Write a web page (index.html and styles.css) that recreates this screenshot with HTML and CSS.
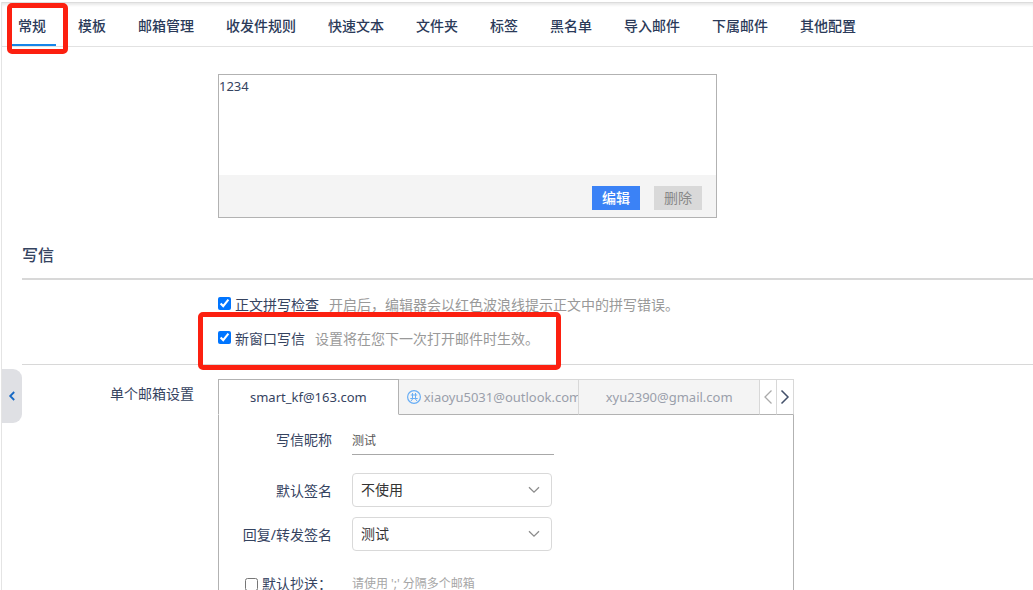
FILE: index.html
```html
<!DOCTYPE html>
<html lang="zh-CN">
  <head>
    <meta charset="UTF-8" />
    <meta name="viewport" content="width=device-width, initial-scale=1.0" />
    <title>邮箱设置</title>
    <link rel="stylesheet" href="styles.css">
  </head>

  <body>
    <div class="page">
      <nav class="tabs">
        <a href="#" class="tab active">常规<span class="mark mark-tab"></span></a>
        <a href="#" class="tab">模板</a>
        <a href="#" class="tab">邮箱管理</a>
        <a href="#" class="tab">收发件规则</a>
        <a href="#" class="tab">快速文本</a>
        <a href="#" class="tab">文件夹</a>
        <a href="#" class="tab">标签</a>
        <a href="#" class="tab">黑名单</a>
        <a href="#" class="tab">导入邮件</a>
        <a href="#" class="tab">下属邮件</a>
        <a href="#" class="tab">其他配置</a>
      </nav>

      <button type="button" class="collapse" aria-label="收起">
        <svg width="8" height="12" viewBox="0 0 8 12"><path d="M6.2 2 L2.2 6 L6.2 10" fill="none" stroke="#1668c4" stroke-width="1.8" /></svg>
      </button>

      <main class="content">
        <div class="row signature-row">
          <div class="signature">
            <div class="signature-text">1234</div>
            <div class="signature-footer">
              <button type="button" class="btn btn-primary">编辑</button>
              <button type="button" class="btn btn-default">删除</button>
            </div>
          </div>
        </div>

        <h2>写信</h2>

        <div class="row check-row">
          <div class="checks">
            <div class="check">
              <input type="checkbox" id="spell" checked />
              <label for="spell">正文拼写检查</label>
              <span class="hint">开启后，编辑器会以红色波浪线提示正文中的拼写错误。</span>
            </div>
            <div class="check">
              <input type="checkbox" id="newWindow" checked />
              <label for="newWindow">新窗口写信</label>
              <span class="hint">设置将在您下一次打开邮件时生效。</span>
              <span class="mark mark-check"></span>
            </div>
          </div>
        </div>

        <div class="row mailbox-row">
          <div class="row-label">单个邮箱设置</div>
          <div class="mailbox">
            <div class="mail-tabs">
              <button type="button" class="mail-tab current">smart_kf@163.com</button>
              <button type="button" class="mail-tab shared">
                <svg width="14" height="14" viewBox="0 0 14 14" fill="none" stroke="#69aef5">
                  <circle cx="7" cy="7" r="6.4" stroke-width="1.2" />
                  <path d="M5.5 3v5.5M8.5 3v5.5M3.8 5h6.4M3.3 8.5h7.4M5.6 9l-1.7 2.1M8.4 9l1.7 2.1" />
                </svg>
                <span>xiaoyu5031@outlook.com</span>
              </button>
              <button type="button" class="mail-tab">xyu2390@gmail.com</button>
              <button type="button" class="arrow" aria-label="上一个">
                <svg width="10" height="16" viewBox="0 0 10 16"><path d="M8.5 1.5 L2 8 L8.5 14.5" fill="none" stroke="#aaa" stroke-width="1.3" /></svg>
              </button>
              <button type="button" class="arrow" aria-label="下一个">
                <svg width="10" height="16" viewBox="0 0 10 16"><path d="M1.5 1.5 L8 8 L1.5 14.5" fill="none" stroke="#43506a" stroke-width="1.5" /></svg>
              </button>
            </div>

            <form class="mail-form">
              <div class="field">
                <label for="nickname">写信昵称</label>
                <input type="text" id="nickname" class="line-input" value="测试" />
              </div>
              <div class="field field-select">
                <label for="defaultSign">默认签名</label>
                <div class="select">
                  <select id="defaultSign">
                    <option>不使用</option>
                    <option>测试</option>
                  </select>
                  <svg width="12" height="8" viewBox="0 0 12 8"><path d="M1 1.2 L6 6.2 L11 1.2" fill="none" stroke="#8c8c8c" stroke-width="1.3" /></svg>
                </div>
              </div>
              <div class="field field-select">
                <label for="replySign">回复/转发签名</label>
                <div class="select">
                  <select id="replySign">
                    <option>测试</option>
                    <option>不使用</option>
                  </select>
                  <svg width="12" height="8" viewBox="0 0 12 8"><path d="M1 1.2 L6 6.2 L11 1.2" fill="none" stroke="#8c8c8c" stroke-width="1.3" /></svg>
                </div>
              </div>
              <div class="field field-cc">
                <label for="ccOn"><input type="checkbox" id="ccOn" />默认抄送：</label>
                <input type="text" class="line-input" aria-label="默认抄送" placeholder="请使用 ';' 分隔多个邮箱" />
              </div>
            </form>
          </div>
        </div>
      </main>
    </div>
  </body>
</html>
```

FILE: styles.css
```css
* {
  box-sizing: border-box;
}

body {
  margin: 0;
  height: 100vh;
  overflow: hidden;
  background-color: #ffffff;
  color: #35435f;
  font-family: "Noto Sans", "Noto Sans CJK SC", sans-serif;
  font-size: 14px;
  line-height: 20px;
}

button,
input,
select {
  font-family: inherit;
  font-size: 14px;
  color: inherit;
}

button {
  padding: 0;
  border: none;
  cursor: pointer;
}

input[type="checkbox"] {
  width: 13px;
  height: 13px;
  margin: 0;
  flex: none;
}

svg {
  display: block;
  flex: none;
}

.page {
  position: relative;
  min-height: 100vh;
  margin: 2px 0 0 1px;
  border-left: 1px solid #e4e4e4;
}

/* top tabs */
.tabs {
  display: flex;
  gap: 12px;
  height: 45px;
  padding-left: 6px;
  border-top: 1px solid #dcdcdc;
  border-bottom: 1px solid #e2e2e2;
  box-shadow: inset 0 3px 3px -1px #e8e8e8;
}

.tab {
  position: relative;
  padding: 13px 10px 0;
  color: #2b3a59;
  font-weight: 500;
  text-decoration: none;
  white-space: nowrap;
}

.tab.active {
  border-bottom: 2px solid #1685e8;
}

/* red frames */
.mark {
  position: absolute;
  border: 5px solid #fc2010;
  border-radius: 5px;
  pointer-events: none;
}

.mark-tab {
  top: 0;
  left: -1px;
  width: 61px;
  height: 51px;
}

.mark-check {
  top: -17px;
  left: -20px;
  width: 363px;
  height: 58px;
}

.collapse {
  position: absolute;
  top: 367px;
  left: 0;
  display: flex;
  align-items: center;
  justify-content: center;
  width: 20px;
  height: 54px;
  border-radius: 0 9px 9px 0;
  background-color: #dfe0e4;
}

.content {
  padding-left: 20px;
}

.row {
  display: grid;
  grid-template-columns: 172px 1fr;
  column-gap: 24px;
}

.row > :last-child {
  grid-column: 2;
}

/* signature */
.signature-row {
  padding-top: 27px;
}

.signature {
  max-width: 499px;
  border: 1px solid #b2b2b2;
}

.signature-text {
  min-height: 100px;
  padding: 1px 0 0;
  font-size: 13px;
}

.signature-footer {
  display: flex;
  justify-content: flex-end;
  gap: 14px;
  padding: 11px 14px 7px;
  background-color: #f4f4f4;
}

.btn {
  width: 48px;
  height: 24px;
  padding-bottom: 2px;
}

.btn-primary {
  background-color: #3b82f6;
  color: #ffffff;
  font-weight: 500;
}

.btn-default {
  background-color: #d9d9d9;
  color: #888888;
}

h2 {
  margin: 25px 0 0;
  padding-bottom: 11px;
  border-bottom: 2px solid #d8d8d8;
  font-size: 16px;
  font-weight: 500;
  line-height: 24px;
}

.check-row {
  padding: 15px 0;
  border-bottom: 1px solid #d8d8d8;
}

.checks {
  display: grid;
  gap: 14px;
}

.check {
  position: relative;
  display: flex;
  align-items: center;
  white-space: nowrap;
}

.check input {
  margin-bottom: 3px;
}

.check label {
  margin-left: 4px;
}

.hint {
  margin-left: 10px;
  color: #999999;
}

/* mailbox panel */
.mailbox-row {
  padding-top: 14px;
}

.row-label {
  padding-top: 5px;
  text-align: right;
}

.mailbox {
  max-width: 576px;
}

.mail-tabs {
  display: grid;
  grid-template-columns: repeat(3, 1fr) 17px 17px;
  height: 36px;
}

.mail-tab {
  min-width: 0;
  overflow: hidden;
  white-space: nowrap;
  background-color: #f4f4f4;
  color: #9a9fab;
  font-size: 13px;
  border: solid #d8d8d8;
  border-width: 1px 1px 0 0;
  border-bottom: 1px solid #b2b2b2;
}

.mail-tab.current {
  background-color: #ffffff;
  color: inherit;
  border-color: #b2b2b2;
  border-left-width: 1px;
  border-left-style: solid;
  border-bottom-color: #ffffff;
}

.mail-tab.shared {
  display: flex;
  align-items: center;
  gap: 3px;
  padding-left: 8px;
}

.arrow {
  display: flex;
  align-items: center;
  justify-content: center;
  background-color: #ffffff;
  border: solid #d8d8d8;
  border-width: 1px 1px 0 0;
  border-bottom: 1px solid #b2b2b2;
}

.mail-form {
  padding: 10px 0 20px;
  border: solid #b2b2b2;
  border-width: 0 1px 1px;
}

.field {
  display: grid;
  grid-template-columns: 113px 202px;
  column-gap: 20px;
  align-items: center;
}

.field label {
  display: flex;
  align-items: center;
  justify-content: flex-end;
  white-space: nowrap;
}

.field label input {
  margin-right: 4px;
}

.line-input {
  height: 30px;
  padding: 0;
  border: none;
  border-bottom: 1px solid #a8a8a8;
  outline: none;
  background: none;
  color: #555555;
  font-size: 12px;
}

.line-input::placeholder {
  color: #a6a6a6;
}

.field-select {
  margin-top: 10px;
}

.field:first-child {
  margin-bottom: 18px;
}

.field-select label {
  padding-top: 2px;
}

.select {
  display: grid;
  align-items: center;
  width: 200px;
}

.select select,
.select svg {
  grid-area: 1 / 1;
}

.select select {
  height: 34px;
  padding: 0 8px 2px;
  appearance: none;
  border: 1px solid #d9d9d9;
  border-radius: 4px;
  background-color: #ffffff;
  color: #333333;
}

.select svg {
  justify-self: end;
  margin-right: 12px;
  pointer-events: none;
}

.field-cc {
  margin-top: 18px;
}
```
